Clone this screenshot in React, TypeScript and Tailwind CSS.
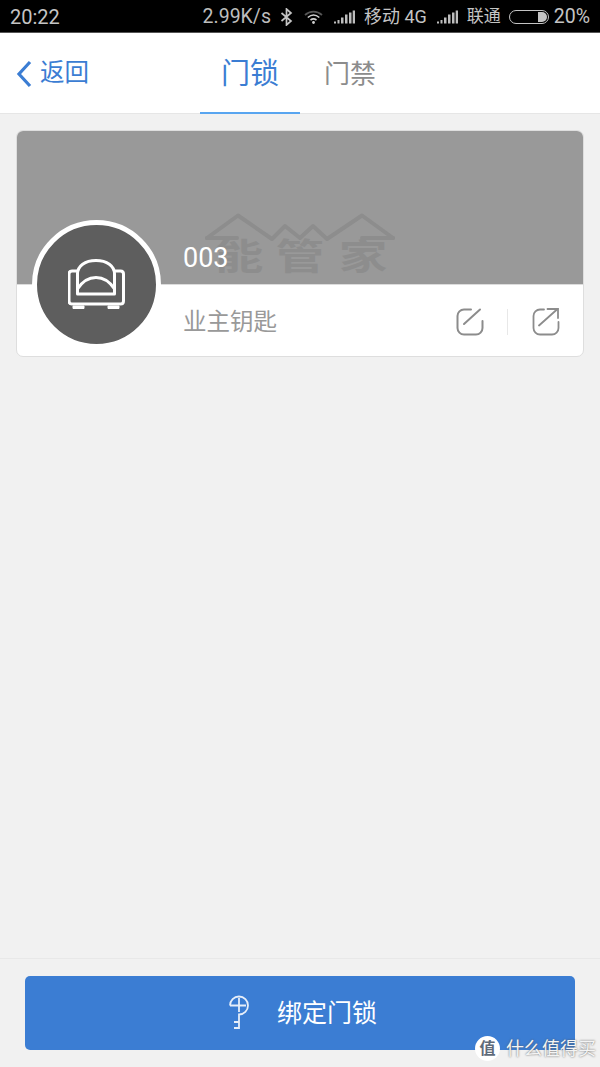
import React from 'react';

const FONT = "font-['Roboto','Noto_Sans_CJK_SC',sans-serif]";

const Signal = () => (
  <svg width="21" height="14" viewBox="0 0 21 14" fill="#bdbdbd">
    <rect x="0" y="11.500" width="2" height="2" />
    <rect x="3.500" y="10" width="2" height="3.500" />
    <rect x="7" y="7.500" width="2.500" height="6" />
    <rect x="11" y="4.500" width="2.500" height="9" />
    <rect x="15" y="2.500" width="2.500" height="11" />
    <rect x="18.700" y="0.500" width="2.300" height="13" />
  </svg>
);

const StatusBar = () => (
  <div className="h-[33px] bg-black flex items-center justify-between pl-[10px] pr-[10px] pt-[1px] text-[20px] leading-none text-[#c4c4c4] border-b border-[#555]">
    <span>20:22</span>
    <div className="flex items-center">
      <span className="text-[19.500px] text-[#bdbdbd]">2.99K/s</span>
      <svg className="ml-[9px]" width="13" height="18" viewBox="0 0 13 18" fill="none" stroke="#c4c4c4" strokeWidth="1.700">
        <path d="M1.500 5l9.500 8-4.500 4V1l4.500 4-9.500 8" />
      </svg>
      <svg className="ml-[11px]" width="19" height="14" viewBox="0 0 19 14" fill="none">
        <path d="M1 5c5-4.500 12-4.500 17 0" stroke="#555" strokeWidth="1.800" />
        <path d="M3.800 7.500c3.500-3 8-3 11.500 0" stroke="#d0d0d0" strokeWidth="1.600" />
        <path d="M6.500 10c2-1.500 4-1.500 6 0" stroke="#d0d0d0" strokeWidth="1.600" />
        <circle cx="9.500" cy="12.500" r="1.400" fill="#d0d0d0" />
      </svg>
      <span className="ml-[11px]"><Signal /></span>
      <span className="ml-[9px] text-[18px]">移动 4G</span>
      <span className="ml-[10px]"><Signal /></span>
      <span className="ml-[9px] text-[17px]">联通</span>
      <div className="ml-[8px] w-[40px] h-[14px] rounded-full border border-[#c4c4c4] flex justify-end items-center pr-[1px]">
        <div className="w-[9px] h-[10px] rounded-r-full bg-[#c4c4c4]" />
      </div>
      <span className="ml-[5px] text-[19.500px]">20%</span>
    </div>
  </div>
);

const NavBar = () => (
  <div className="relative h-[81px] bg-white border-b border-[#e6e6e6] flex">
    <div className="w-[200px] flex items-center pl-[16px] pt-[1px] text-[#3b7dd3]">
      <svg width="16" height="28" viewBox="0 0 16 28" fill="none" stroke="#3b7dd3" strokeWidth="3.200">
        <path d="M14 2L3 14l11 12" />
      </svg>
      <span className="ml-[8px] text-[24.500px] leading-none">返回</span>
    </div>
    <div className="w-[100px] h-[81px] flex items-center justify-center pt-[3px] text-[29px] leading-none text-[#3b7dd3] border-b-2 border-[#58a5f0] -mb-px">
      门锁
    </div>
    <div className="w-[100px] flex items-center justify-center pt-[2px] text-[26px] leading-none text-[#8c8c8c]">
      门禁
    </div>
  </div>
);

const Sofa = () => (
  <svg width="58" height="52" viewBox="2 0 58 52" fill="none" stroke="white" strokeWidth="3" strokeLinejoin="round">
    <path d="M11.500 35V15C11.500 7 19 1.500 30 1.500S48.500 7 48.500 15v20z" />
    <path d="M11.500 30C16 23 23 18.500 30 18.500S44 23 48.500 30" />
    <path d="M11.500 12H6c-1.800 0-3 1.200-3 3v27c0 1.800 1.200 3 3 3h48.500c1.800 0 3-1.200 3-3V15c0-1.800-1.200-3-3-3h-6" />
    <path d="M7 47h11v2.500H7zM42 47h11v2.500H42z" fill="white" strokeWidth="1" />
  </svg>
);

const EditIcon = () => (
  <svg width="28" height="28" viewBox="0 0 28 28" fill="none" stroke="#8c8c8c" strokeWidth="2" strokeLinecap="round">
    <path d="M15 1.500H8A6.500 6.500 0 0 0 1.500 8v12A6.500 6.500 0 0 0 8 26.500h12a6.500 6.500 0 0 0 6.500-6.500v-7" />
    <path d="M8 16L24 1.500" />
  </svg>
);

const ShareIcon = () => (
  <svg width="28" height="28" viewBox="0 0 28 28" fill="none" stroke="#8c8c8c" strokeWidth="1.800" strokeLinecap="round">
    <path d="M12 1.500H8A6.500 6.500 0 0 0 1.500 8v12A6.500 6.500 0 0 0 8 26.500h12a6.500 6.500 0 0 0 6.500-6.500v-6" />
    <path d="M7 17.500L25.500 1" />
    <path d="M15.500 1h10.500v9" />
  </svg>
);

const Watermark = () => (
  <div className="absolute left-[188px] top-[81px] w-[192px] h-[64px]">
    <svg className="absolute inset-0" width="192" height="64" viewBox="0 0 192 64" fill="none" stroke="#8d8d8d" strokeWidth="4" strokeLinecap="round" strokeLinejoin="round">
      <path d="M2 26L33 3.500 67 27 80 14l15 12 13-12 14 13L157 3.500 188 26" />
      <path d="M2 26H32M157 26h31" />
    </svg>
    <div className="absolute left-[10px] top-[28px] flex text-[#8d8d8d] text-[36px] leading-[36px] font-bold">
      <span className="w-[48px] flex justify-center scale-x-[1.35]">能</span>
      <span className="ml-[13px] w-[48px] flex justify-center scale-x-[1.35]">管</span>
      <span className="ml-[15px] w-[48px] flex justify-center scale-x-[1.35]">家</span>
    </div>
  </div>
);

const KeyCard = () => (
  <div className="relative mx-[16px] mt-[16px] h-[227px] rounded-[7px] border border-[#dedede] bg-white overflow-hidden">
    <div className="relative h-[154px] bg-[#999999] border-b border-[#dcdcdc] overflow-hidden">
      <Watermark />
      <div className="absolute left-[166px] top-[112px] text-[27px] leading-[30px] text-white">003</div>
    </div>
    <div className="h-[71px] flex items-center pl-[166px] pr-[23px] pt-[3px]">
      <span className="mt-[1px] text-[23.500px] leading-none text-[#999]">业主钥匙</span>
      <div className="ml-auto flex items-center">
        <EditIcon />
        <div className="ml-[23px] mr-[24px] w-px h-[26px] bg-[#e8e8e8]" />
        <ShareIcon />
      </div>
    </div>
    <div className="absolute left-[15px] top-[89px] w-[129px] h-[129px] rounded-full bg-[#5e5e5e] border-[5px] border-white flex items-center justify-center">
      <Sofa />
    </div>
  </div>
);

const BindBar = () => (
  <div className="relative h-[109px] mt-auto border-t border-[#e8e8e8] px-[25px] pt-[17px]">
    <div className="h-[74px] rounded-[5px] bg-[#3b7dd3] flex items-center pl-[201px] text-white">
      <svg width="24" height="36" viewBox="0 0 24 36" fill="none" stroke="#e6eef9" strokeWidth="1.800">
        <path d="M4 10.500a9 9 0 1 1 9 9V34" />
        <path d="M4 10.500h16M13 3v14" />
        <path d="M8 27h5M8 33h5" />
      </svg>
      <span className="ml-[27px] text-[25px] leading-none">绑定门锁</span>
    </div>
    <div className="absolute left-[475px] top-[77px] flex items-center">
      <div className="w-[25px] h-[25px] rounded-full bg-white flex items-center justify-center text-[16px] leading-none font-bold text-[#5f6b7a]">
        值
      </div>
      <span className="ml-[6px] text-[18px] leading-none text-[#f4f4f4] whitespace-nowrap [text-shadow:0_0_2px_#555]">什么值得买</span>
    </div>
  </div>
);

const App = () => {
  return (
    <div className={`${FONT} w-[600px] h-[1067px] bg-[#f1f1f1] flex flex-col overflow-hidden`}>
      <StatusBar />
      <NavBar />
      <KeyCard />
      <BindBar />
    </div>
  );
};

export default App;
